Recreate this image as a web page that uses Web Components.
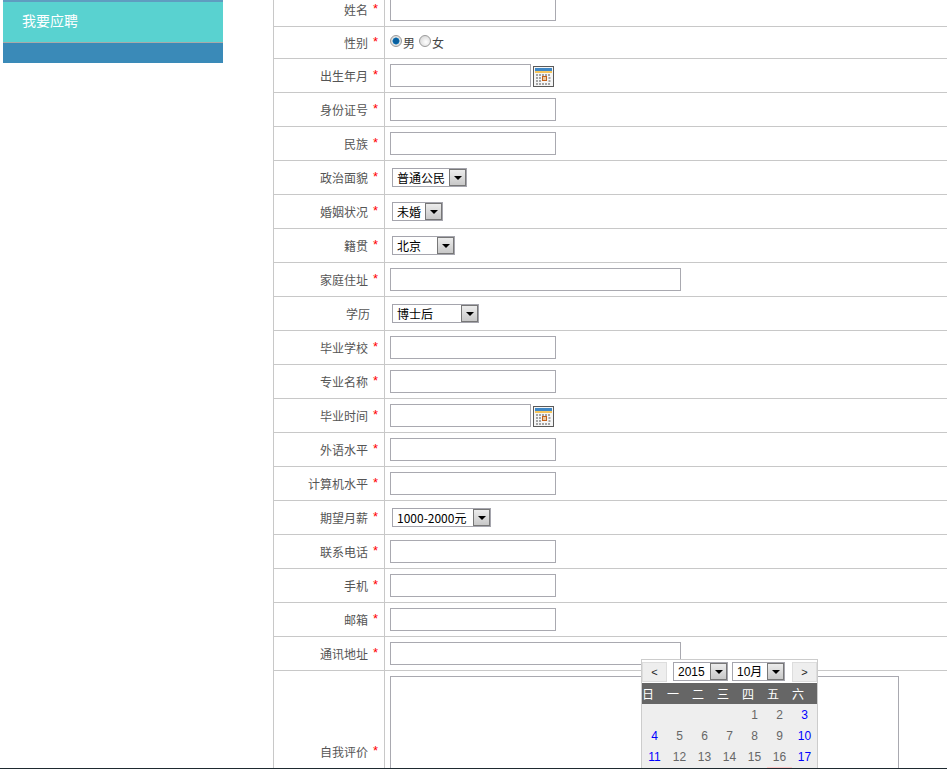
<!DOCTYPE html>
<html lang="zh">
<head>
<meta charset="utf-8">
<title>我要应聘</title>
<style>
html, body { margin: 0; padding: 0; background: #fff; }
body { height: 769px; overflow: hidden; font: 12px "Noto Sans CJK SC", "Liberation Sans", sans-serif; }
</style>
</head>
<body>
<apply-page>
    <side-nav slot="side" title-text="我要应聘"></side-nav>
    <form-table slot="main">
        <form-row label="姓名" required style="margin-top:-7px"><text-box w="166"></text-box></form-row>
        <form-row label="性别" required h="32"><radio-group></radio-group></form-row>
        <form-row label="出生年月" required><date-box></date-box></form-row>
        <form-row label="身份证号" required><text-box w="166"></text-box></form-row>
        <form-row label="民族" required><text-box w="166"></text-box></form-row>
        <form-row label="政治面貌" required><drop-down w="75" text="普通公民"></drop-down></form-row>
        <form-row label="婚姻状况" required><drop-down w="51" text="未婚"></drop-down></form-row>
        <form-row label="籍贯" required><drop-down w="63" text="北京"></drop-down></form-row>
        <form-row label="家庭住址" required><text-box w="291"></text-box></form-row>
        <form-row label="学历" plain><drop-down w="87" text="博士后"></drop-down></form-row>
        <form-row label="毕业学校" required><text-box w="166"></text-box></form-row>
        <form-row label="专业名称" required><text-box w="166"></text-box></form-row>
        <form-row label="毕业时间" required><date-box></date-box></form-row>
        <form-row label="外语水平" required><text-box w="166"></text-box></form-row>
        <form-row label="计算机水平" required><text-box w="166"></text-box></form-row>
        <form-row label="期望月薪" required><drop-down w="99" text="1000-2000元"></drop-down></form-row>
        <form-row label="联系电话" required><text-box w="166"></text-box></form-row>
        <form-row label="手机" required><text-box w="166"></text-box></form-row>
        <form-row label="邮箱" required><text-box w="166"></text-box></form-row>
        <form-row label="通讯地址" required><text-box w="291"></text-box></form-row>
        <form-row label="自我评价" required h="162" align="start"><note-box></note-box></form-row>
    </form-table>
    <date-picker slot="main"></date-picker>
</apply-page>

<script>
class ApplyPage extends HTMLElement {
    constructor() {
        super();
        this.attachShadow({ mode: 'open' });
        this.shadowRoot.innerHTML = `
            <style>
                :host { display: block; height: 769px; overflow: hidden; }
                .top {
                    display: grid;
                    grid-template-columns: 273px 1fr;
                    height: 768px;
                    overflow: hidden;
                }
                .main { position: relative; overflow: hidden; }
                .foot { height: 1px; background: #1f2a30; }
            </style>
            <div class="top">
                <div><slot name="side"></slot></div>
                <div class="main"><slot name="main"></slot></div>
            </div>
            <div class="foot"></div>
        `;
    }
}

class SideNav extends HTMLElement {
    constructor() {
        super();
        this.attachShadow({ mode: 'open' });
        this.shadowRoot.innerHTML = `
            <style>
                :host { display: block; width: 220px; margin-left: 3px; }
                .item {
                    height: 40px;
                    padding-left: 19px;
                    border-top: 2px solid #5f9dc0;
                    border-bottom: 1px solid #a9a9a9;
                    background: #59d2d0;
                    color: #fff;
                    font-size: 14px;
                    line-height: 37px;
                }
                .rest { height: 20px; background: #3a8ab8; }
            </style>
            <div class="item">${this.getAttribute('title-text')}</div>
            <div class="rest"></div>
        `;
    }
}

class FormTable extends HTMLElement {
    constructor() {
        super();
        this.attachShadow({ mode: 'open' });
        this.shadowRoot.innerHTML = `
            <style>
                :host {
                    display: block;
                    border-left: 1px solid #c8c8c8;
                    color: #555;
                }
            </style>
            <slot></slot>
        `;
    }
}

class FormRow extends HTMLElement {
    constructor() {
        super();
        this.attachShadow({ mode: 'open' });
        const h = this.getAttribute('h') || 34;
        const start = this.getAttribute('align') === 'start';
        const star = this.hasAttribute('required') ? '<i>*</i>' : '';
        this.shadowRoot.innerHTML = `
            <style>
                :host {
                    display: grid;
                    grid-template-columns: 111px 1fr;
                    height: ${h}px;
                    box-sizing: border-box;
                    border-bottom: 1px solid #c8c8c8;
                }
                .name {
                    display: flex;
                    align-items: center;
                    justify-content: flex-end;
                    padding: 0 ${star ? 5 : 14}px 0 0;
                    border-right: 1px solid #c8c8c8;
                    font-size: 12px;
                    line-height: 16px;
                }
                i {
                    width: 6px;
                    margin-left: 5px;
                    color: #f00;
                    font: normal 13px "Liberation Sans", sans-serif;
                    position: relative;
                    top: -1px;
                }
                .field {
                    display: flex;
                    align-items: ${start ? 'flex-start' : 'center'};
                    padding: ${start ? 5 : 0}px 0 0 5px;
                }
            </style>
            <div class="name"><span>${this.getAttribute('label')}</span>${star}</div>
            <div class="field"><slot></slot></div>
        `;
    }
}

class TextBox extends HTMLElement {
    constructor() {
        super();
        this.attachShadow({ mode: 'open' });
        this.shadowRoot.innerHTML = `
            <style>
                :host { display: block; }
                input {
                    display: block;
                    box-sizing: border-box;
                    width: ${this.getAttribute('w')}px;
                    height: 23px;
                    margin: 0;
                    padding: 0 3px;
                    border: 1px solid #a9a9b0;
                    background: #fff;
                    outline: none;
                }
            </style>
            <input type="text">
        `;
    }
}

class DateBox extends HTMLElement {
    constructor() {
        super();
        this.attachShadow({ mode: 'open' });
        this.shadowRoot.innerHTML = `
            <style>
                :host { display: flex; align-items: flex-end; gap: 2px; }
                input {
                    box-sizing: border-box;
                    width: 141px;
                    height: 23px;
                    margin: 0;
                    border: 1px solid #a9a9b0;
                    outline: none;
                }
                svg { display: block; }
            </style>
            <input type="text">
            <svg width="21" height="21" viewBox="0 0 21 21">
                <rect x="0.5" y="0.5" width="20" height="20" fill="#f6f6f6" stroke="#5a5a5a"/>
                <rect x="2" y="2" width="17" height="3" fill="#3f87c6"/>
                <rect x="2" y="5" width="17" height="2" fill="#f7c65c"/>
                <g fill="#a5a5a5">
                    <rect x="3" y="8" width="2" height="2"/><rect x="6" y="8" width="2" height="2"/><rect x="9" y="8" width="2" height="2"/><rect x="12" y="8" width="2" height="2"/><rect x="15" y="8" width="2" height="2"/>
                    <rect x="3" y="11" width="2" height="2"/><rect x="6" y="11" width="2" height="2"/><rect x="15.5" y="11" width="2" height="2"/>
                    <rect x="3" y="14" width="2" height="2"/><rect x="6" y="14" width="2" height="2"/><rect x="15.5" y="14" width="2" height="2"/>
                    <rect x="3" y="17" width="2" height="2"/><rect x="6" y="17" width="2" height="2"/><rect x="9" y="17" width="2" height="2"/><rect x="12" y="17" width="2" height="2"/><rect x="15" y="17" width="2" height="2"/>
                </g>
                <rect x="9.5" y="10.5" width="4" height="4" fill="#e8c9a0" stroke="#c4601a"/>
            </svg>
        `;
    }
}

class RadioGroup extends HTMLElement {
    constructor() {
        super();
        this.attachShadow({ mode: 'open' });
        this.shadowRoot.innerHTML = `
            <style>
                :host { display: flex; align-items: center; font-size: 12px; color: #444; }
                b {
                    display: block;
                    width: 12px;
                    height: 12px;
                    box-sizing: border-box;
                    border: 1px solid #9a9a9a;
                    border-radius: 50%;
                    margin: -3px 1px 0 0;
                    background: radial-gradient(circle at 60% 60%, #fff, #cfcfcf);
                }
                b.on { background: radial-gradient(circle, #0a5f9e 0 2.5px, #1b87c9 3.2px, #e0e0e0 3.8px); }
                span { margin-right: 4px; }
            </style>
            <b class="on"></b><span>男</span><b></b><span>女</span>
        `;
    }
}

class DropDown extends HTMLElement {
    constructor() {
        super();
        this.attachShadow({ mode: 'open' });
        this.shadowRoot.innerHTML = `
            <style>
                :host {
                    display: flex;
                    box-sizing: border-box;
                    width: ${this.getAttribute('w')}px;
                    height: 19px;
                    margin-left: 2px;
                    border: 1px solid #a5a5ad;
                    background: #fff;
                    color: #000;
                    font-size: 12px;
                    line-height: 17px;
                }
                .val { flex: 1; padding-left: 4px; white-space: nowrap; overflow: hidden; }
                .btn {
                    width: 17px;
                    box-sizing: border-box;
                    border: 1px solid #777;
                    background: linear-gradient(#ececec, #c8c8c8);
                    display: flex;
                    align-items: center;
                    justify-content: center;
                }
                .btn::after {
                    content: "";
                    border: 4px solid transparent;
                    border-top: 4px solid #000;
                    border-bottom: 0;
                }
            </style>
            <div class="val">${this.getAttribute('text')}</div>
            <div class="btn"></div>
        `;
    }
}

class NoteBox extends HTMLElement {
    constructor() {
        super();
        this.attachShadow({ mode: 'open' });
        this.shadowRoot.innerHTML = `
            <style>
                :host { display: block; }
                div {
                    box-sizing: border-box;
                    width: 509px;
                    height: 150px;
                    border: 1px solid #a9a9b0;
                    background: #fff;
                }
            </style>
            <div></div>
        `;
    }
}

class DatePicker extends HTMLElement {
    constructor() {
        super();
        this.attachShadow({ mode: 'open' });
        const week = ['日', '一', '二', '三', '四', '五', '六'];
        let cells = '';
        // only the weeks above the fold carry a number, the fourth shows just the today cell
        for (let i = 0; i < 28; i++) {
            const day = i - 3;
            const weekend = i % 7 === 0 || i % 7 === 6;
            const cls = (weekend ? 'we' : '') + (day === 23 ? ' today' : '');
            cells += `<span class="${cls}">${day > 0 && day < 18 ? day : ''}</span>`;
        }
        this.shadowRoot.innerHTML = `
            <style>
                :host {
                    position: absolute;
                    left: 368px;
                    top: 659px;
                    width: 177px;
                    box-sizing: border-box;
                    border: 1px solid #ccc;
                    background: #eee;
                    font-size: 12px;
                }
                .bar {
                    display: flex;
                    align-items: center;
                    height: 23px;
                    background: #fff;
                }
                .nav {
                    width: 25px;
                    height: 20px;
                    box-sizing: border-box;
                    border: 1px solid #ddd;
                    background: #eee;
                    color: #222;
                    font: 11px/18px "Liberation Sans", sans-serif;
                    text-align: center;
                }
                .sel { display: flex; gap: 4px; margin: 0 7px 0 6px; }
                drop-down {
                    margin: 0;
                    font-family: "Liberation Sans", "Noto Sans CJK SC", sans-serif;
                    line-height: 19px;
                }
                .week, .days { display: grid; grid-template-columns: repeat(7, 25px); }
                .week {
                    height: 21px;
                    background: #666;
                    color: #fff;
                    line-height: 22px;
                }
                .days {
                    grid-auto-rows: 21px;
                    line-height: 23px;
                    color: #666;
                    font-family: "Liberation Sans", sans-serif;
                }
                .days span { text-align: center; }
                .we { color: #00f; }
                .today { background: #ffc9c9; }
            </style>
            <div class="bar">
                <div class="nav">&lt;</div>
                <div class="sel">
                    <drop-down w="55" text="2015"></drop-down>
                    <drop-down w="53" text="10月"></drop-down>
                </div>
                <div class="nav">&gt;</div>
            </div>
            <div class="week">${week.map(d => `<span>${d}</span>`).join('')}</div>
            <div class="days">${cells}</div>
        `;
    }
}

customElements.define('apply-page', ApplyPage);
customElements.define('side-nav', SideNav);
customElements.define('form-table', FormTable);
customElements.define('form-row', FormRow);
customElements.define('text-box', TextBox);
customElements.define('date-box', DateBox);
customElements.define('radio-group', RadioGroup);
customElements.define('drop-down', DropDown);
customElements.define('note-box', NoteBox);
customElements.define('date-picker', DatePicker);
</script>
</body>
</html>
